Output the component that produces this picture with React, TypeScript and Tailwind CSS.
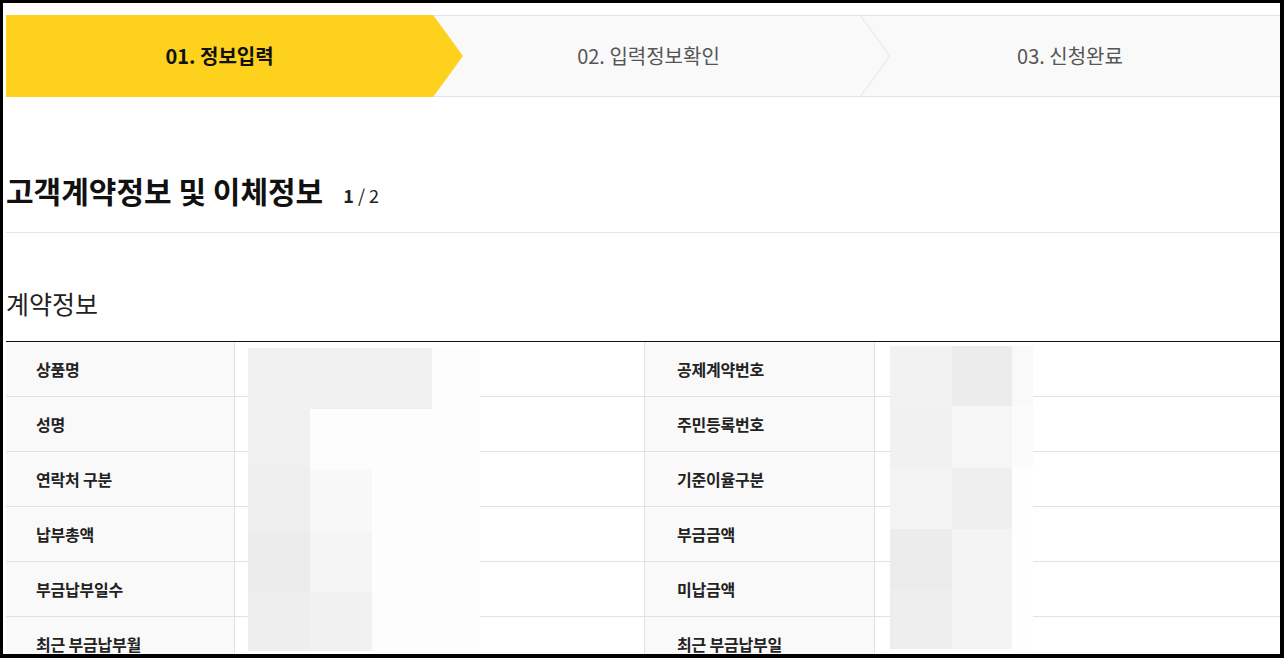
const rows: [string, string][] = [
  ["상품명", "공제계약번호"],
  ["성명", "주민등록번호"],
  ["연락처 구분", "기준이율구분"],
  ["납부총액", "부금금액"],
  ["부금납부일수", "미납금액"],
  ["최근 부금납부월", "최근 부금납부일"],
];

const mosaicA: string[] = [
  "bg-[#f1f1f1]", "bg-[#f0f0f0]", "bg-[#f0f0f0]", "bg-[#fdfdfd]",
  "bg-[#f0f0f0]", "bg-[#fdfdfd]", "bg-[#fdfdfd]", "bg-[#fdfdfd]",
  "bg-[#efefef]", "bg-[#f8f8f8]", "bg-[#fdfdfd]", "bg-[#fdfdfd]",
  "bg-[#ececec]", "bg-[#f5f5f5]", "bg-[#fdfdfd]", "bg-[#fdfdfd]",
  "bg-[#eeeeee]", "bg-[#f1f1f1]", "bg-[#fdfdfd]", "bg-[#fdfdfd]",
];

const mosaicB: string[] = [
  "bg-[#f2f2f2]", "bg-[#ececec]", "bg-[#f9f9f9]",
  "bg-[#f1f1f1]", "bg-[#f6f6f6]", "bg-[#fbfbfb]",
  "bg-[#f3f3f3]", "bg-[#efefef]", "bg-[#fefefe]",
  "bg-[#ececec]", "bg-[#f4f4f4]", "bg-[#fefefe]",
  "bg-[#eeeeee]", "bg-[#f4f4f4]", "bg-[#fefefe]",
];

export default function App() {
  return (
    <div className="h-[658px] w-full overflow-hidden border-black border-t-[3px] border-l-[3px] border-r-[4px] border-b-[4px] bg-white pl-[3px] font-['Noto_Sans_CJK_KR','Noto_Sans',sans-serif] text-[#222]">
      {/* Stepper */}
      <div className="mt-[12px] flex h-[82px]">
        <div className="relative z-10 flex w-[427px] items-center justify-center bg-[#fdd11c] text-[20px] font-bold text-[#111]">
          01. 정보입력
          <svg className="absolute left-full top-0" width="30" height="82" viewBox="0 0 30 82">
            <polygon points="0,0 30,41 0,82" fill="#fdd11c" />
          </svg>
        </div>
        <div className="relative z-[5] flex w-[427px] items-center justify-center border-y border-[#e3e3e3] bg-[#f9f9f9] pl-[4px] text-[20px] text-[#555]">
          02. 입력정보확인
          <svg className="absolute left-full top-[-1px]" width="32" height="82" viewBox="0 0 32 82">
            <polygon points="0,0 30,41 0,82" fill="#f9f9f9" />
            <polyline points="0,0 30,41 0,82" fill="none" stroke="#e2e2e2" strokeWidth="1" />
          </svg>
        </div>
        <div className="flex flex-1 items-center justify-center border-y border-[#e3e3e3] bg-[#f9f9f9] text-[20px] text-[#555]">
          03. 신청완료
        </div>
      </div>

      {/* Heading */}
      <div className="flex items-baseline border-b border-[#e5e5e5] pt-[75px] pb-[23px]">
        <h2 className="text-[30px] font-bold leading-[36px] text-[#111]">
          고객계약정보 및 이체정보
        </h2>
        <span className="ml-[20px] text-[18px] text-[#222]">
          <b className="font-bold">1</b> / 2
        </span>
      </div>

      <h3 className="mt-[54px] text-[25px] font-normal leading-[32px] text-[#222]">
        계약정보
      </h3>

      {/* Table */}
      <div className="relative mt-[22px] border-t border-[#111]">
        {rows.map(([l, r], i) => (
          <div
            key={i}
            className="grid h-[55px] grid-cols-[229px_410px_230px_1fr] border-b border-[#e2e2e2]"
          >
            <div className="flex items-center border-r border-[#e2e2e2] bg-[#f9f9f9] pl-[30px] text-[16px] font-bold tracking-[-0.2px] text-[#222]">
              {l}
            </div>
            <div className="border-r border-[#e2e2e2] bg-white" />
            <div className="flex items-center border-r border-[#e2e2e2] bg-[#f9f9f9] pl-[32px] text-[16px] font-bold tracking-[-0.2px] text-[#222]">
              {r}
            </div>
            <div className="bg-white" />
          </div>
        ))}

        {/* Redacted (mosaic) values */}
        <div className="absolute left-[242px] top-[6px] grid grid-cols-[62px_62px_60px_48px] grid-rows-[61px_61px_61px_61px_59px]">
          {mosaicA.map((c, i) => (
            <div key={i} className={c} />
          ))}
        </div>
        <div className="absolute left-[884px] top-[4px] grid grid-cols-[62px_60px_21px] grid-rows-[60px_62px_61px_60px_60px]">
          {mosaicB.map((c, i) => (
            <div key={i} className={c} />
          ))}
        </div>
      </div>
    </div>
  );
}
